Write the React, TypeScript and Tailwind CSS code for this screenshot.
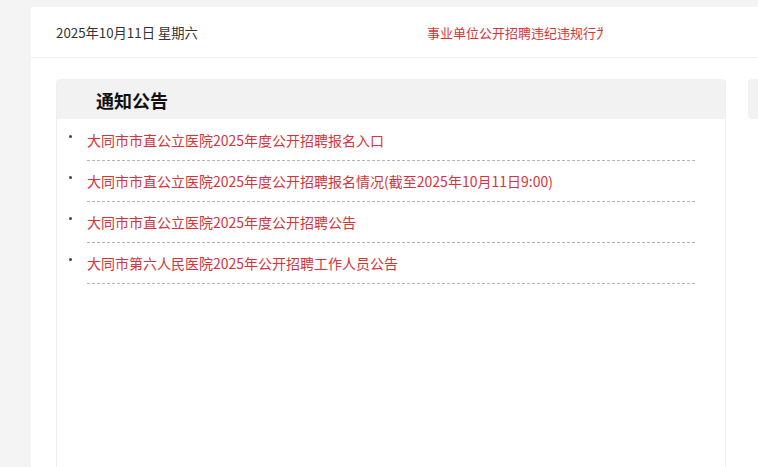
import React from 'react';

const notices = [
  '大同市市直公立医院2025年度公开招聘报名入口',
  '大同市市直公立医院2025年度公开招聘报名情况(截至2025年10月11日9:00)',
  '大同市市直公立医院2025年度公开招聘公告',
  '大同市第六人民医院2025年公开招聘工作人员公告',
];

export default function App() {
  return (
    <div className="min-h-screen h-[467px] overflow-hidden bg-[#f4f4f4] pl-[31px] pt-[7px] font-['Noto_Sans_CJK_SC',sans-serif]">
      <div className="w-[1200px] h-[600px] bg-white">
        {/* top bar */}
        <div className="flex h-[51px] items-center border-b border-[#eeeeee] pl-[25px] pt-[2px]">
          <div className="w-[371px] text-[13.3px] leading-5 text-[#333]">2025年10月11日 星期六</div>
          <div className="w-[176px] overflow-hidden whitespace-nowrap text-[13px] leading-5 text-[#d6343a]">
            事业单位公开招聘违纪违规行为处理规定
          </div>
        </div>

        {/* content */}
        <div className="flex gap-[22px] pl-[25px] pt-[21px]">
          <div className="w-[670px] h-[500px] rounded-t-[4px] border-x border-[#eeeeee]">
            <div className="h-10 rounded-t-[4px] bg-[#f2f2f2] pl-[39px] pt-[2px] text-[18px] font-bold leading-[38px] text-[#111]">
              通知公告
            </div>
            <ul className="pt-px">
              {notices.map((title) => (
                <li key={title} className="ml-[12px] mr-[30px] flex">
                  <span className="mt-[15px] h-[3px] w-[3px] shrink-0 rounded-full bg-[#444]" />
                  <a
                    href="#"
                    className="ml-[15px] flex-1 border-b border-dashed border-[#b5b5b5] py-[10px] text-[14px] leading-5 text-[#d6343a]"
                  >
                    {title}
                  </a>
                </li>
              ))}
            </ul>
          </div>
          <div className="h-10 w-[300px] rounded-[4px] bg-[#f2f2f2]" />
        </div>
      </div>
    </div>
  );
}
